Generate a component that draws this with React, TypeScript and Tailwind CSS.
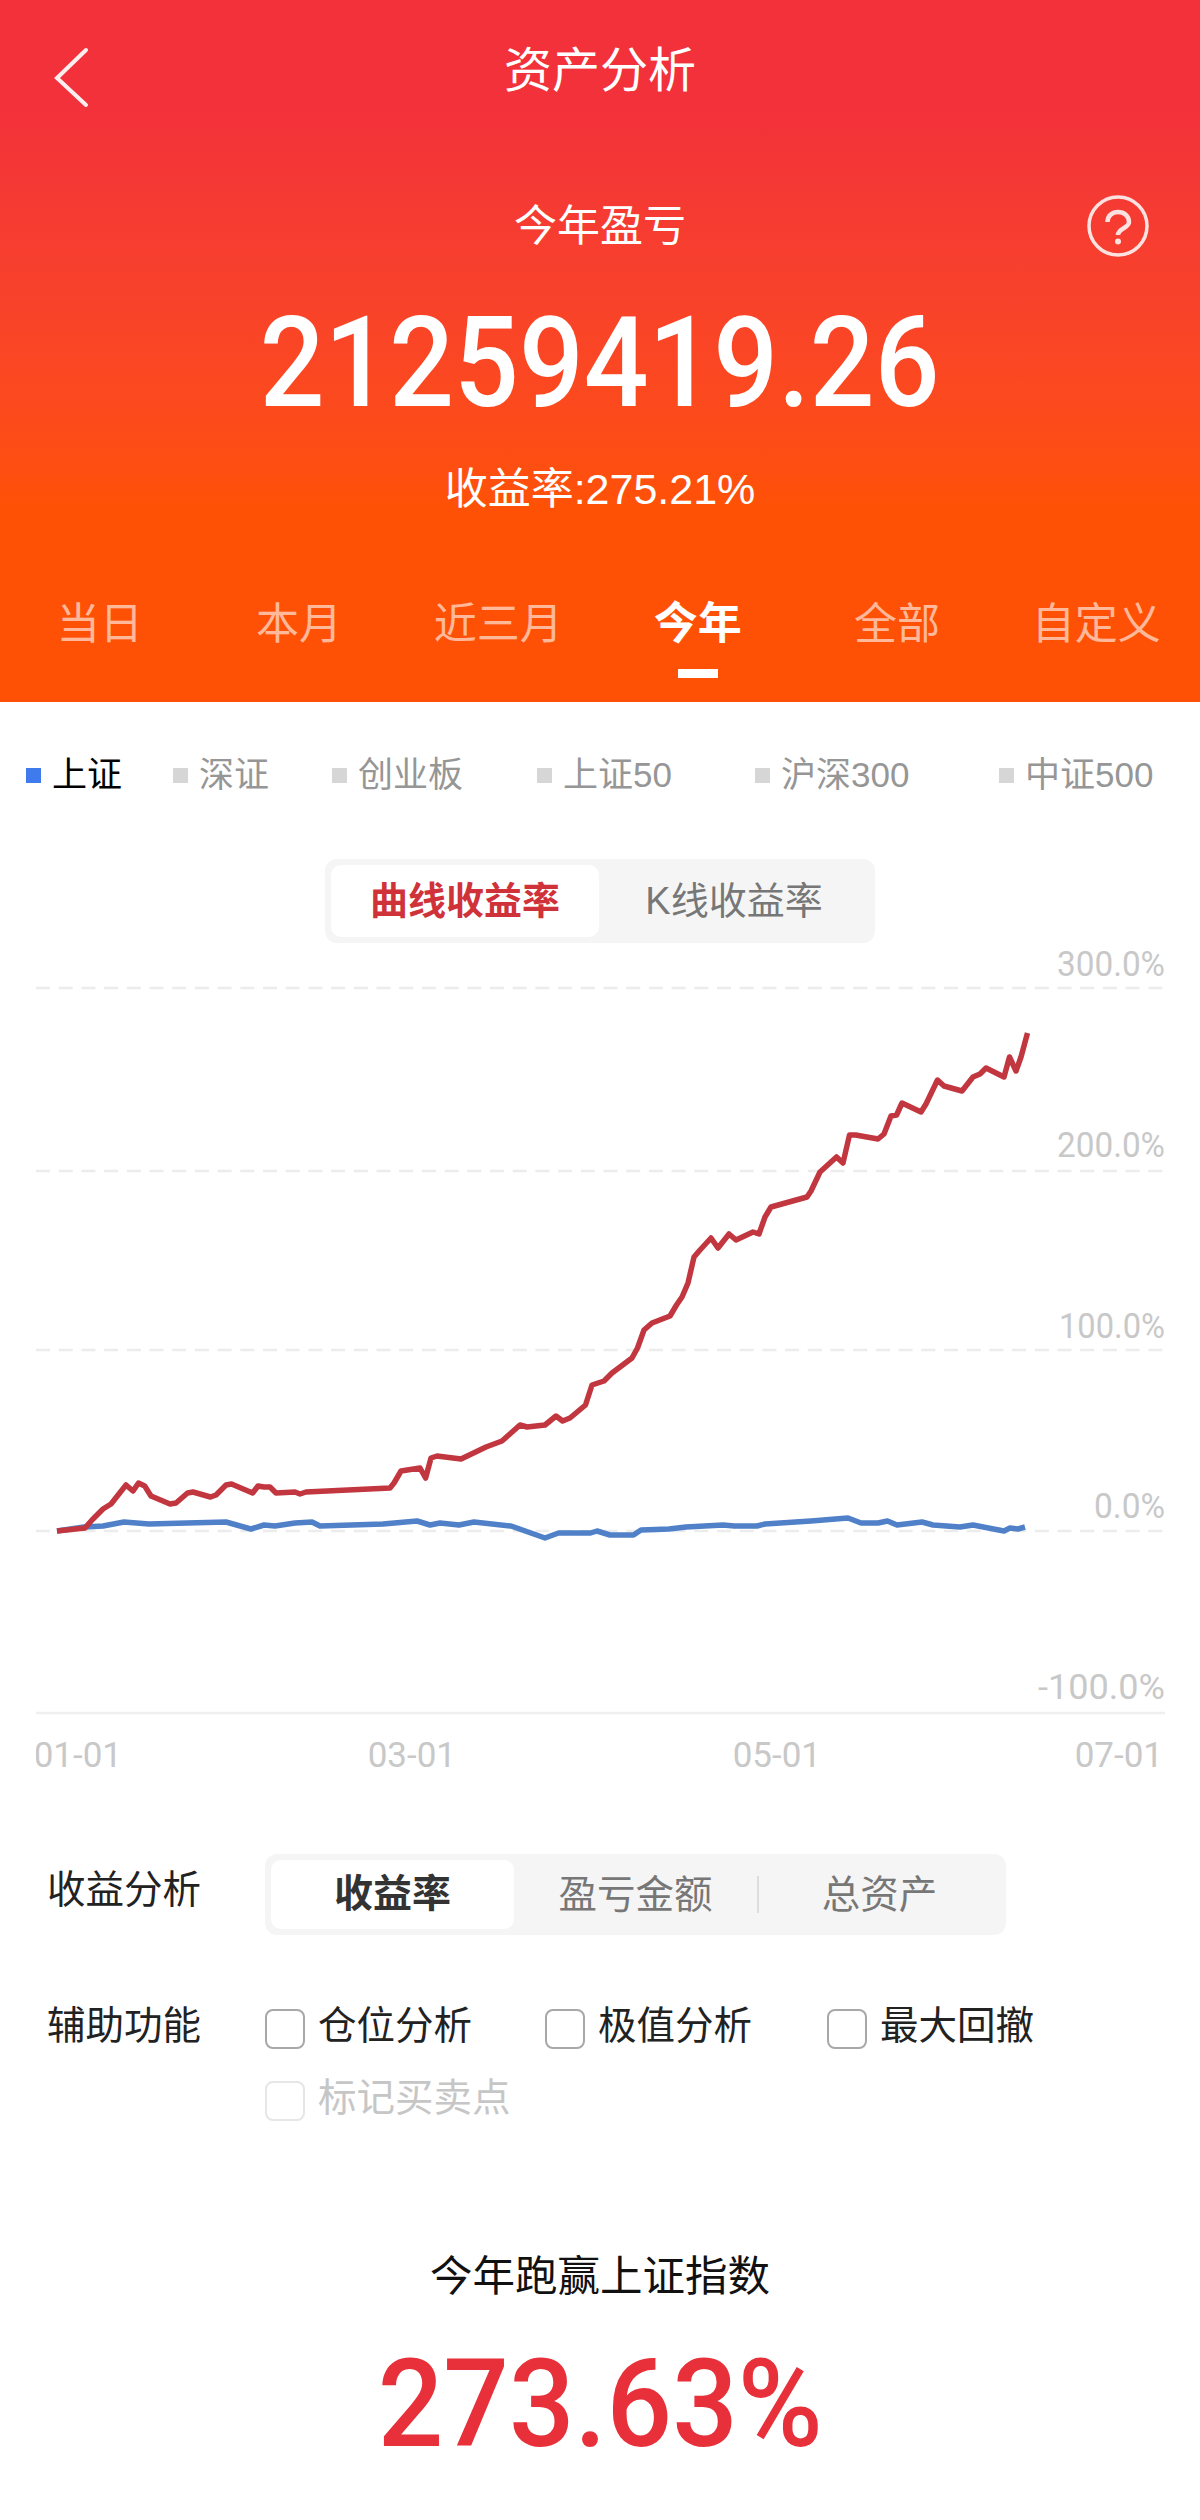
const RED_LINE =
  '57,1531 85,1528 92,1520 103,1509 111,1504 126,1485 133,1491 138.5,1483 144.7,1486 151,1496 170,1504 176,1503 187.5,1493 193,1492 210.5,1497 216,1495 226,1485 231.5,1484 252.6,1493 258,1486 264,1487 270,1487 276,1493 295,1492 300,1494 306,1492 390,1488 394,1483 401,1471 420,1468 425.6,1478 431,1458 437,1456 461,1459 486,1447 502,1441 511,1433 520,1425 527,1427 545,1425 556,1416 562.6,1421 570,1418 585.5,1405 592,1385 604,1381 612,1373 632,1358 637.5,1348 644,1330 652,1323 670,1316 676.5,1305 682,1297 688,1283 694,1257 700,1250 711,1238 718,1248 729,1234 736,1240 753,1232 759,1234 765,1217 771,1207 807,1197 811,1191 820,1172 836.5,1157 843,1163 849.5,1135 855.6,1135 878,1139 884,1134 891,1116 896.6,1115 902,1103 921,1112 926,1104 937.5,1080 944,1086 962,1091 973,1077 980,1074 986,1068 1004,1077 1009.5,1057 1016,1071 1021,1057 1027.5,1033';

const BLUE_LINE =
  '57,1531 84,1527 103,1526 124,1522 149,1524 187,1523 226,1522 251,1529 264,1525 275,1526 295,1523 312,1522 320,1526 383,1524 417,1521 430,1525 440,1523 459,1525 474,1522 511,1526 545,1538 558.5,1533 590.6,1533 597,1531 610,1535 633.5,1535 641,1530 669,1529 686,1527 723,1525 734.5,1526 757,1526 765,1524 811,1521 835.5,1519 848,1518 861,1523 878,1523 887.5,1521 897,1525 922,1522 933,1525 960,1527 973,1525 1004,1531 1010,1528 1018,1529 1025,1527';

const GRID_LINES = [988, 1171, 1350, 1531];

const Y_LABELS = [
  { text: '300.0%', y: 976, width: 108 },
  { text: '200.0%', y: 1157, width: 108 },
  { text: '100.0%', y: 1338, width: 106 },
  { text: '0.0%', y: 1518, width: 71 },
  { text: '-100.0%', y: 1699, width: 127 },
];

const X_LABELS = [
  { text: '01-01', x: 122 },
  { text: '03-01', x: 456 },
  { text: '05-01', x: 821 },
  { text: '07-01', x: 1163 },
];

const PERIODS = ['当日', '本月', '近三月', '今年', '全部', '自定义'];

const INDEXES = [
  { name: '上证', width: 'w-[147px]' },
  { name: '深证', width: 'w-[159px]' },
  { name: '创业板', width: 'w-[205px]' },
  { name: '上证50', width: 'w-[218px]' },
  { name: '沪深300', width: 'w-[244px]' },
  { name: '中证500', width: 'w-[170px]' },
];

function Checkbox({ label, disabled }: { label: string; disabled?: boolean }) {
  return (
    <div className="flex items-center gap-[13px]">
      <span
        className={`block h-[40px] w-[40px] rounded-[8px] border-2 ${
          disabled ? 'border-[#e6e6e6]' : 'border-[#a8a8a8]'
        }`}
      />
      <span className={`h-[40px] text-[38.5px] leading-[34px] ${disabled ? 'text-[#c6c6c6]' : 'text-[#222222]'}`}>{label}</span>
    </div>
  );
}

function ReturnChart() {
  return (
    <svg className="mt-[-3px] ml-[36px] block" width="1140" height="835" viewBox="36 940 1140 835">
      {GRID_LINES.map((y) => (
        <line key={y} x1="36" x2="1165" y1={y} y2={y} stroke="#ececec" strokeWidth="2.5" strokeDasharray="14 8.7" />
      ))}
      <line x1="36" x2="1165" y1="1713" y2="1713" stroke="#efefef" strokeWidth="2.5" />
      {Y_LABELS.map((label) => (
        <text
          key={label.text}
          x="1165"
          y={label.y}
          textAnchor="end"
          textLength={label.width}
          lengthAdjust="spacingAndGlyphs"
          fontSize="35"
          fill="#c8c8c8"
          fontFamily="Roboto, sans-serif"
        >
          {label.text}
        </text>
      ))}
      {X_LABELS.map((label) => (
        <text key={label.text} x={label.x} y="1767" textAnchor="end" fontSize="35" fill="#c8c8c8" fontFamily="Roboto, sans-serif">
          {label.text}
        </text>
      ))}
      <polyline points={BLUE_LINE} fill="none" stroke="#4f80c8" strokeWidth="5.500" strokeLinejoin="round" />
      <polyline points={RED_LINE} fill="none" stroke="#c2363f" strokeWidth="5.500" strokeLinejoin="round" />
    </svg>
  );
}

export default function App() {
  return (
    <div className="min-h-[2520px] w-[1200px] overflow-hidden bg-white font-['Liberation_Sans','Noto_Sans_CJK_SC',sans-serif]">
      {/* Header */}
      <div className="h-[702px] bg-gradient-to-b from-[#f2313a] from-[15%] to-[#ff5106] to-[72%] pt-[41px] text-white">
        <div className="grid h-[60px] grid-cols-[1fr_auto_1fr] grid-rows-[60px] items-center">
          <svg className="ml-[52px]" width="40" height="76" viewBox="0 0 40 76" fill="none" stroke="white" strokeWidth="4" strokeLinecap="round" opacity="0.92">
            <path d="M34 17 L5 45 L34 72" />
          </svg>
          <h1 className="text-[48px] leading-[60px] font-normal">资产分析</h1>
        </div>

        <div className="mt-[94px] grid h-[60px] grid-cols-[1fr_auto_1fr] items-center">
          <div />
          <div className="text-[43px] leading-[60px]">今年盈亏</div>
          <div className="flex justify-end pr-[51px]">
            <svg width="62" height="62" viewBox="0 0 62 62" fill="none" stroke="white" strokeWidth="3.500" opacity="0.85">
              <circle cx="31" cy="31" r="29" />
              <path d="M20.500 27c0-6 4.500-10 10.500-10s11 4 11 10c0 6.500-11 6-11 13" strokeWidth="4.500" />
              <circle cx="31" cy="46.500" r="3" fill="white" stroke="none" />
            </svg>
          </div>
        </div>

        <div className="mt-[43px] text-center font-['Roboto',sans-serif] text-[126px] leading-[130px] font-medium">
          <span className="inline-block scale-x-[0.905]">21259419.26</span>
        </div>
        <div className="mt-[36px] text-center text-[43px] leading-[50px]">收益率:275.21%</div>

        <div className="mt-[85px] grid grid-cols-6 pr-[4px]">
          {PERIODS.map((period) => {
            const active = period === '今年';
            return (
              <div key={period} className="flex flex-col items-center">
                <span className={`leading-[50px] ${active ? 'text-[44px] font-bold text-white' : 'text-[43px] text-white/60'}`}>{period}</span>
                <span className={`mt-[20px] block h-[9px] w-[40px] ${active ? 'bg-white' : ''}`} />
              </div>
            );
          })}
        </div>
      </div>

      {/* Index legend */}
      <div className="mt-[48px] flex h-[50px] items-center pl-[26px]">
        {INDEXES.map((item, i) => (
          <div key={item.name} className={`flex shrink-0 items-center gap-[11px] ${item.width}`}>
            <span className={`block h-[15px] w-[15px] ${i === 0 ? 'bg-[#3f7bec]' : 'bg-[#d6d6d6]'}`} />
            <span className={`whitespace-nowrap text-[35px] leading-[50px] ${i === 0 ? 'text-black' : 'text-[#969696]'}`}>{item.name}</span>
          </div>
        ))}
      </div>

      {/* Chart type switch */}
      <div className="mt-[59px] ml-[325px] grid h-[84px] w-[550px] grid-cols-[268px_1fr] rounded-[12px] bg-[#f5f5f5] p-[6px]">
        <div className="flex items-center justify-center rounded-[10px] bg-white text-[38px] font-bold text-[#d0323a]">曲线收益率</div>
        <div className="flex items-center justify-center text-[38px] text-[#777777]">K线收益率</div>
      </div>

      <ReturnChart />

      {/* Return analysis */}
      <div className="mt-[79px] flex pl-[47px]">
        <div className="w-[218px] pt-[10px] text-[38.5px] leading-[52px] text-[#222222]">收益分析</div>
        <div className="grid h-[81px] w-[741px] grid-cols-3 rounded-[12px] bg-[#f5f5f5] p-[6px]">
          <div className="flex items-center justify-center rounded-[10px] bg-white text-[39px] font-bold text-[#333333]">收益率</div>
          <div className="flex items-center justify-center text-[38.5px] text-[#777777]">盈亏金额</div>
          <div className="flex items-center">
            <span className="block h-[37px] w-[2px] bg-[#dddddd]" />
            <span className="flex-1 text-center text-[38.5px] text-[#777777]">总资产</span>
          </div>
        </div>
      </div>

      {/* Helper toggles */}
      <div className="mt-[74px] flex pl-[47px]">
        <div className="mt-[-3px] w-[218px] text-[38.5px] leading-[40px] text-[#222222]">辅助功能</div>
        <div className="grid grid-cols-[280px_282px_auto] gap-y-[32px]">
          <Checkbox label="仓位分析" />
          <Checkbox label="极值分析" />
          <Checkbox label="最大回撤" />
          <Checkbox label="标记买卖点" disabled />
        </div>
      </div>

      {/* Summary */}
      <div className="mt-[126px] text-center text-[42.5px] leading-[60px] text-[#111111]">今年跑赢上证指数</div>
      <div className="mt-[38px] text-center font-['Roboto',sans-serif] text-[122px] leading-[120px] font-medium text-[#e8303a]">
        <span className="inline-block scale-x-[0.946]">273.63%</span>
      </div>
    </div>
  );
}
